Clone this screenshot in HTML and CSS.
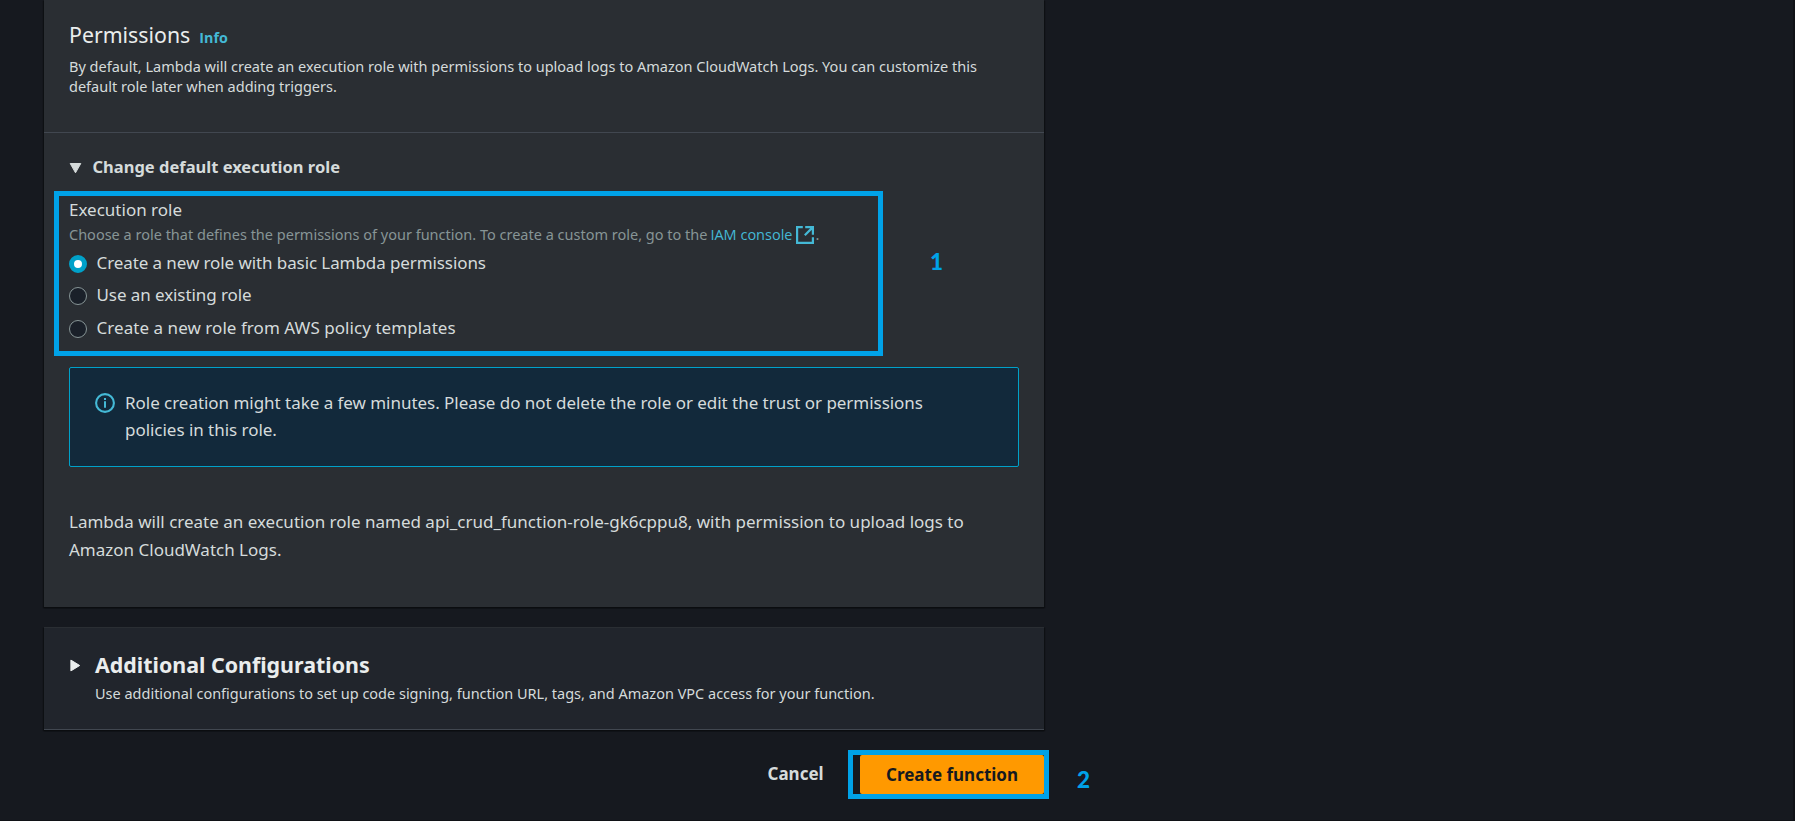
FILE: index.html
```html
<!DOCTYPE html>
<html lang="en">
<head>
<meta charset="utf-8">
<title>Create function</title>
<link rel="stylesheet" href="styles.css">
</head>
<body>
<main class="page">
  <section class="panel permissions">
    <header class="panel-header">
      <h2 class="title"><span>Permissions</span><a class="info">Info</a></h2>
      <p class="description">By default, Lambda will create an execution role with permissions to upload logs to Amazon CloudWatch Logs. You can customize this<br>default role later when adding triggers.</p>
    </header>
    <div class="expander">
      <svg class="caret-down" width="13" height="11" viewBox="0 0 13 11"><path d="M1.2.5h10.6L6.5 9.8z" fill="currentColor" stroke="currentColor" stroke-linejoin="round"/></svg>
      <span>Change default execution role</span>
    </div>
    <div class="callout callout-role">
      <div class="field-label">Execution role</div>
      <div class="hint"><span>Choose a role that defines the permissions of your function. To create a custom role, go to the</span><a class="link">IAM console</a><svg class="external" width="18" height="18" viewBox="0 0 18 18" fill="none" stroke="currentColor" stroke-width="2.2"><path d="M6.8 1.1H1.1v15.8h15.8V11.2M9.2 1.1h7.7v7.7M16.4 1.6 8.8 9.2"/></svg><span>.</span></div>
      <label class="option option-basic"><i class="radio checked"></i><span>Create a new role with basic Lambda permissions</span></label>
      <label class="option option-existing"><i class="radio"></i><span>Use an existing role</span></label>
      <label class="option option-template"><i class="radio"></i><span>Create a new role from AWS policy templates</span></label>
      <b class="step step-one">1</b>
    </div>
    <div class="alert">
      <svg class="alert-icon" width="20" height="20" viewBox="0 0 20 20" fill="none" stroke="currentColor"><circle cx="10" cy="10" r="8.9" stroke-width="2.1"/><path d="M10 8.3v6.4M10 5v2" stroke-width="2"/></svg>
      <p class="alert-text">Role creation might take a few minutes. Please do not delete the role or edit the trust or permissions<br>policies in this role.</p>
    </div>
    <p class="note">Lambda will create an execution role named api_crud_function-role-gk6cppu8, with permission to upload logs to<br>Amazon CloudWatch Logs.</p>
  </section>
  <section class="panel additional">
    <svg class="caret-right" width="11" height="13" viewBox="0 0 11 13"><path d="M.9 1.1v10.8L9.7 6.5z" fill="currentColor" stroke="currentColor" stroke-linejoin="round"/></svg>
    <div>
      <h2 class="additional-title">Additional Configurations</h2>
      <p class="additional-text">Use additional configurations to set up code signing, function URL, tags, and Amazon VPC access for your function.</p>
    </div>
  </section>
  <footer class="actions">
    <a class="cancel">Cancel</a>
    <div class="callout callout-create"><button class="create">Create function</button><b class="step step-two">2</b></div>
  </footer>
</main>
</body>
</html>
```

FILE: styles.css
```css
* { box-sizing: border-box; }
html { background: #16191f; }
body {
  margin: 0;
  height: 821px;
  overflow: hidden;
  background: #16191f;
  border-right: 2px solid #101216;
  border-bottom: 1px solid #101216;
  color: #d5dbdb;
  font-family: "Noto Sans", "Open Sans", sans-serif;
  font-size: 17px;
}
h2, p { margin: 0; }
p, span, a, b { white-space: nowrap; }
.page { width: 1000px; margin-left: 44px; }
.panel { box-shadow: 0 1px 1px #0b0d10, 1px 1px 1px #0f1115, -1px 1px 1px #0f1115; }
.permissions { height: 607px; background: #2a2e33; }
.panel-header { height: 133px; padding: 20px 25px 0; border-bottom: 1px solid #414750; }
.title { display: flex; align-items: baseline; gap: 9px; height: 30px; line-height: 30px; font-size: 21.3px; font-weight: 400; color: #eaeded; }
.info { font-family: "Open Sans", sans-serif; font-size: 14.3px; font-weight: 700; color: #44b9d6; }
.description { margin-top: 6px; font-size: 14.53px; line-height: 20px; }
.expander { display: flex; gap: 10.5px; padding: 20px 0 0 25px; height: 58px; line-height: 28px; font-size: 16.5px; font-weight: 700; }
.caret-down { margin-top: 10px; }
.callout { position: relative; flex-shrink: 0; border: 5px solid #00a2e8; }
.callout-role { width: 829px; height: 165px; margin-left: 10px; padding-left: 10px; }
.field-label { height: 26px; line-height: 27px; }
.hint { display: flex; height: 24px; line-height: 24px; font-size: 14.5px; color: #879596; }
.link { margin-left: 3px; font-family: "Open Sans", sans-serif; line-height: 25px; color: #44b9d6; }
.external { margin: 4px 1px 0 4px; color: #44b9d6; }
.option { display: flex; gap: 9.5px; height: 33px; line-height: 33px; }
.option-basic { letter-spacing: -.09px; }
.option-existing { margin-top: -1px; letter-spacing: -.08px; }
.option-template { letter-spacing: .05px; }
.radio { width: 18px; height: 18px; margin-top: 9px; border: 1px solid #879596; border-radius: 50%; background: #1a2029; }
.radio.checked { border: 5px solid #00a1c9; background: #fff; }
.step { position: absolute; color: #00a2e8; font-family: Lato, sans-serif; font-size: 22.5px; font-weight: 900; line-height: 30px; }
.step-one { left: 871px; top: 51px; }
.step-two { left: 224px; top: 10px; }
.alert { display: flex; gap: 10px; width: 950px; height: 100px; margin: 11px 0 0 25px; padding: 21px 0 0 25px; border: 1px solid #00a1c9; border-radius: 2px; background: #12293b; }
.alert-icon { margin-top: 4px; color: #44b9d6; }
.alert-text { line-height: 27px; letter-spacing: -.035px; }
.note { padding: 41px 0 0 25px; line-height: 28px; }
.additional { display: flex; gap: 14px; height: 103px; margin-top: 20px; padding: 22px 26px 0; border-top: 1px solid #2a2e33; border-bottom: 1px solid #414750; background: #21252c; }
.caret-right { margin-top: 9px; color: #eaeded; }
.additional-title { height: 30px; line-height: 29px; font-size: 21.4px; color: #eaeded; }
.additional-text { margin-top: 4px; font-size: 14.49px; line-height: 20px; }
.actions { display: flex; height: 49px; margin-top: 20px; }
.cancel { flex-shrink: 0; margin-left: 723.5px; width: 80.5px; line-height: 48px; font-size: 17px; font-weight: 700; }
.callout-create { width: 201px; height: 49px; padding-left: 7px; background: #16191f; }
.create { display: block; width: 184px; height: 39px; padding: 0 0 1px 26px; border: 0; border-radius: 2px; background: #ff9900; color: #16191f; font: 700 17px/37px "Noto Sans", sans-serif; text-align: left; }
```
